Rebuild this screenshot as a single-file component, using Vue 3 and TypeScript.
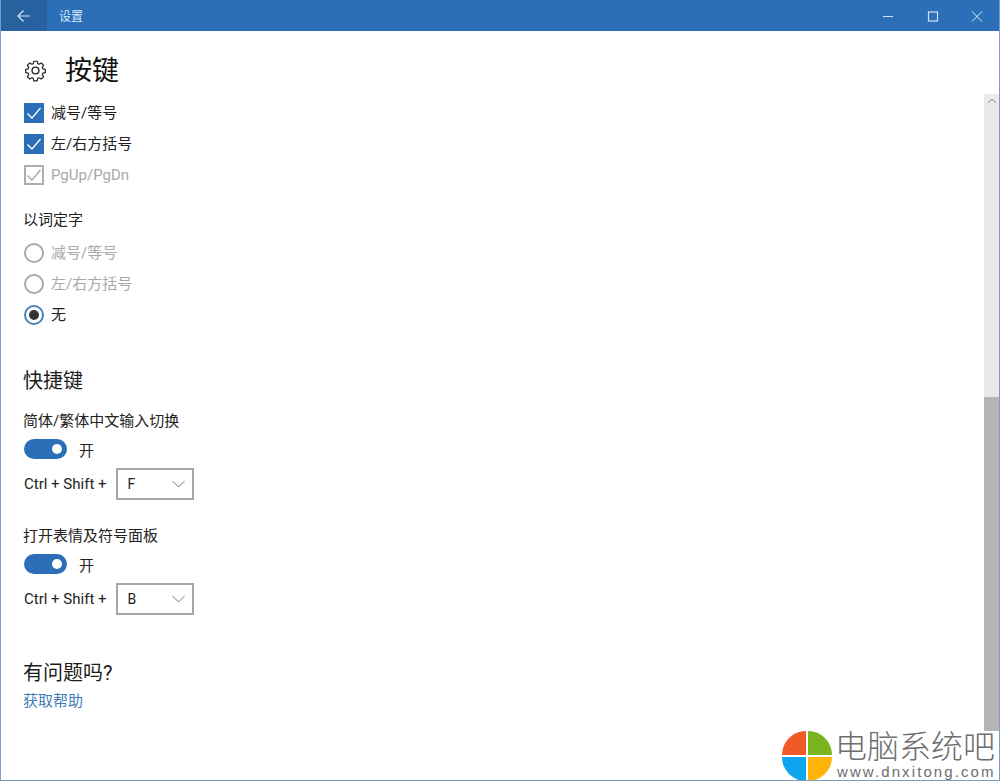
<script setup lang="ts">
const checks = [
  { label: '减号/等号', disabled: false },
  { label: '左/右方括号', disabled: false },
  { label: 'PgUp/PgDn', disabled: true },
]
const radios = [
  { label: '减号/等号', disabled: true, on: false },
  { label: '左/右方括号', disabled: true, on: false },
  { label: '无', disabled: false, on: true },
]
const shortcuts = [
  { title: '简体/繁体中文输入切换', key: 'F' },
  { title: '打开表情及符号面板', key: 'B' },
]
</script>

<template>
  <div class="window">
    <header class="titlebar">
      <button class="back" aria-label="返回">
        <svg width="16" height="14" viewBox="0 0 16 14" fill="none" stroke="#dbe8f6" stroke-width="1.2">
          <path d="M14 7H2M7.5 1.5L2 7l5.5 5.5" />
        </svg>
      </button>
      <span class="app-title">设置</span>
      <div class="controls">
        <svg class="ctl" width="46" height="30" viewBox="0 0 46 30" fill="none" stroke="#d5e4f5" stroke-width="1"><path d="M21 15.5h10" /></svg>
        <svg class="ctl" width="46" height="30" viewBox="0 0 46 30" fill="none" stroke="#d5e4f5" stroke-width="1.2"><rect x="20.5" y="11" width="9" height="9" /></svg>
        <svg class="ctl" width="46" height="30" viewBox="0 0 46 30" fill="none" stroke="#e6eff9" stroke-width="1"><path d="M18 10.5l10 10M28 10.5l-10 10" /></svg>
      </div>
    </header>

    <div class="body">
      <main class="content">
        <div class="page-head">
          <svg class="gear" width="23" height="23" viewBox="0 0 24 24" fill="none" stroke="#222" stroke-width="1.4" stroke-linejoin="round">
            <path d="M10 2.5h4l.6 2.9 1.7.7 2.5-1.6 2.8 2.8-1.6 2.5.7 1.7 2.9.6v4l-2.9.6-.7 1.7 1.6 2.5-2.8 2.8-2.5-1.6-1.7.7-.6 2.9h-4l-.6-2.9-1.7-.7-2.5 1.6-2.8-2.8 1.6-2.5-.7-1.7-2.9-.6v-4l2.9-.6.7-1.7-1.6-2.5 2.8-2.8 2.5 1.6 1.7-.7z" transform="translate(12 12) scale(.88) translate(-12 -13.5)" />
            <circle cx="12" cy="12" r="3.6" />
          </svg>
          <h1 class="page-title">按键</h1>
        </div>

        <div class="checks">
          <label v-for="c in checks" :key="c.label" class="row" :class="{ disabled: c.disabled }">
            <span class="checkbox">
              <svg width="16" height="14" viewBox="0 0 16 14" fill="none" stroke-width="1.3" :stroke="c.disabled ? '#a8a8a8' : '#fff'">
                <path d="M1.5 7.5l4.5 4.5L14.5 2" />
              </svg>
            </span>
            {{ c.label }}
          </label>
        </div>

        <p class="label group-label">以词定字</p>
        <div class="radios">
          <label v-for="r in radios" :key="r.label" class="row" :class="{ disabled: r.disabled }">
            <span class="radio" :class="{ on: r.on }"></span>
            {{ r.label }}
          </label>
        </div>

        <h2 class="section section-keys">快捷键</h2>

        <section v-for="s in shortcuts" :key="s.key" class="shortcut">
          <p class="label">{{ s.title }}</p>
          <div class="toggle-row">
            <span class="toggle"><span class="knob"></span></span>
            <span>开</span>
          </div>
          <div class="combo-row">
            <span>Ctrl + Shift +</span>
            <div class="select">
              <span>{{ s.key }}</span>
              <svg width="13" height="8" viewBox="0 0 13 8" fill="none" stroke="#777" stroke-width="1"><path d="M.5 1l6 6 6-6" /></svg>
            </div>
          </div>
        </section>

        <h2 class="section section-help">有问题吗?</h2>
        <a class="help" href="#">获取帮助</a>
      </main>

      <aside class="scrollbar">
        <div class="track">
          <svg class="up" width="16" height="14" viewBox="0 0 16 14" fill="none" stroke="#8a8a8a" stroke-width="1"><path d="M4 9l4-4 4 4" /></svg>
        </div>
        <div class="thumb"></div>
      </aside>
    </div>

    <div class="watermark">
      <svg class="logo" width="50" height="50" viewBox="0 0 50 50">
        <path d="M24 24V0A24 24 0 0 0 0 24z" fill="#f1592a" />
        <path d="M26 24V0a24 24 0 0 1 24 24z" fill="#7ab41d" />
        <path d="M24 26H0a24 24 0 0 0 24 24z" fill="#0ea5ee" />
        <path d="M26 26h24a24 24 0 0 1-24 24z" fill="#ffb40a" />
      </svg>
      <div class="mark-text">
        <div class="mark-cn">电脑系统吧</div>
        <div class="mark-en">www.dnxitong.com</div>
      </div>
    </div>
  </div>
</template>

<style>
html, body { margin: 0; background: #fff; }
</style>

<style scoped>
.window {
  position: relative;
  width: 1000px;
  height: 781px;
  box-sizing: border-box;
  display: flex;
  flex-direction: column;
  overflow: hidden;
  background: #fff;
  border-left: 1px solid #7d9cc4;
  border-right: 1px solid #7d9cc4;
  border-bottom: 1px solid #7d9cc4;
  font-family: Roboto, "Noto Sans CJK SC", sans-serif;
  font-size: 15px;
  color: #222;
}
.titlebar {
  flex: none;
  height: 31px;
  margin: 0 -1px;
  display: flex;
  align-items: center;
  background: #2a6fb8;
  color: #dbe8f6;
}
.back {
  width: 47px;
  height: 31px;
  padding: 0;
  border: 0;
  background: #28619f;
  display: flex;
  align-items: center;
  justify-content: center;
}
.app-title { margin-left: 12px; font-size: 12px; }
.controls { margin-left: auto; display: flex; }
.ctl { display: block; }
.body { flex: 1; min-height: 0; display: flex; }
.content { flex: 1; padding-left: 23px; min-width: 0; }
.page-head { height: 47px; margin-top: 15px; display: flex; align-items: center; }
.gear { margin: 2px 18px 0 0; }
.page-title { margin: 4px 0 0; font-size: 27px; font-weight: 400; line-height: 47px; color: #111; }
.checks { margin-top: 10px; display: flex; flex-direction: column; gap: 11px; }
.row { display: flex; align-items: center; gap: 7px; height: 20px; line-height: 20px; }
.row.disabled { color: #a9a9a9; }
.checkbox {
  width: 20px;
  height: 20px;
  box-sizing: border-box;
  display: flex;
  align-items: center;
  justify-content: center;
  background: #2a6fb8;
}
.disabled .checkbox { background: #fff; border: 2px solid #adadad; }
.label { margin: 0 0 0 -1px; line-height: 20px; }
.group-label { margin-top: 25px; }
.radios { margin-top: 13px; display: flex; flex-direction: column; gap: 11px; }
.radio {
  width: 20px;
  height: 20px;
  box-sizing: border-box;
  border: 2px solid #a8a8a8;
  border-radius: 50%;
  display: flex;
  align-items: center;
  justify-content: center;
}
.radio.on { border-color: #4a82b5; }
.radio.on::after {
  content: "";
  width: 10px;
  height: 10px;
  border-radius: 50%;
  background: #333;
}
.section { margin: 0 0 0 -1px; font-size: 20px; font-weight: 400; line-height: 28px; color: #1c1c1c; }
.section-keys { margin-top: 42px; }
.shortcut { margin-top: 16px; }
.shortcut + .shortcut { margin-top: 26px; }
.toggle-row { margin-top: 8px; height: 20px; display: flex; align-items: center; gap: 12px; }
.toggle {
  width: 43px;
  height: 20px;
  border-radius: 10px;
  background: #2a6fb8;
  position: relative;
}
.knob {
  position: absolute;
  right: 5px;
  top: 5px;
  width: 10px;
  height: 10px;
  border-radius: 50%;
  background: #fff;
}
.combo-row { margin-top: 9px; display: flex; align-items: center; gap: 9px; }
.select {
  width: 78px;
  height: 32px;
  box-sizing: border-box;
  border: 2px solid #a6a6a6;
  padding: 0 7px 0 10px;
  display: flex;
  align-items: center;
  justify-content: space-between;
  font-size: 14px;
}
.section-help { margin-top: 44px; }
.help { display: block; margin: 4px 0 0 -1px; line-height: 20px; color: #3f7cb8; text-decoration: none; }
.scrollbar {
  flex: none;
  width: 15px;
  margin-top: 63px;
  height: 637px;
  display: flex;
  flex-direction: column;
}
.track { height: 303px; background: #e9e9e9; }
.up { display: block; }
.thumb { flex: 1; background: #b5b5b5; }
.watermark {
  position: absolute;
  left: 781px;
  top: 731px;
  width: 219px;
  height: 50px;
  display: flex;
  background: #fff;
}
.logo { flex: none; }
.mark-text { margin-left: 3px; color: #6e6e6e; }
.mark-cn { font-size: 32px; line-height: 33px; height: 33px; white-space: nowrap; font-weight: 300; }
.mark-en { font-family: "Liberation Sans", sans-serif; font-size: 15px; line-height: 15px; letter-spacing: 2.1px; margin-left: 2px; white-space: nowrap; }
</style>
